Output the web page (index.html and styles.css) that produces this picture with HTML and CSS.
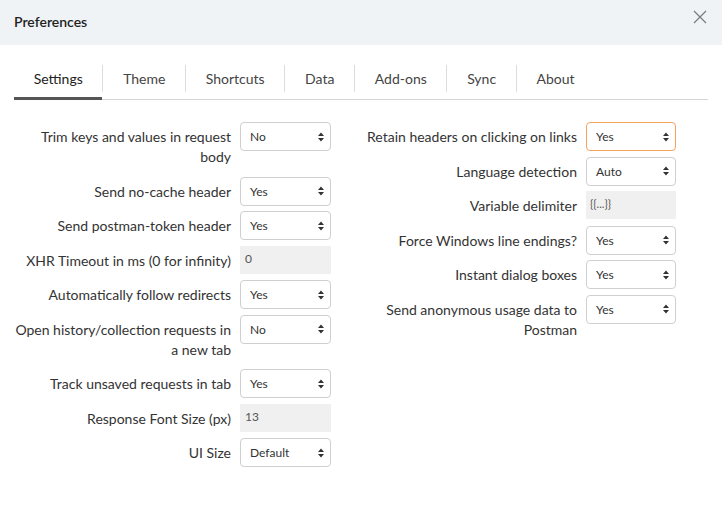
FILE: index.html
```html
<!DOCTYPE html>
<html>
<head>
<meta charset="utf-8">
<title>Preferences</title>
<link rel="stylesheet" href="styles.css">
</head>
<body>
<div class="dialog">
  <div class="header">
    <div class="title">Preferences</div>
    <svg class="close" width="14" height="14" viewBox="0 0 14 14"><path d="M1 1L13 13M13 1L1 13" stroke="#7a7a7a" stroke-width="1.2" fill="none"/></svg>
  </div>
  <div class="tabs">
    <div class="tab active">Settings</div>
    <div class="sep"></div>
    <div class="tab">Theme</div>
    <div class="sep"></div>
    <div class="tab">Shortcuts</div>
    <div class="sep"></div>
    <div class="tab">Data</div>
    <div class="sep"></div>
    <div class="tab">Add-ons</div>
    <div class="sep"></div>
    <div class="tab">Sync</div>
    <div class="sep"></div>
    <div class="tab">About</div>
  </div>
  <div class="form">
    <div class="col">
      <div class="row"><div class="label">Trim keys and values in request body</div><div class="select"><span>No</span><svg width="6" height="10" viewBox="0 0 6 10"><path d="M0 4L3 0.5L6 4ZM0 6L3 9.5L6 6Z" fill="#333"/></svg></div></div>
      <div class="row"><div class="label">Send no-cache header</div><div class="select"><span>Yes</span><svg width="6" height="10" viewBox="0 0 6 10"><path d="M0 4L3 0.5L6 4ZM0 6L3 9.5L6 6Z" fill="#333"/></svg></div></div>
      <div class="row"><div class="label">Send postman-token header</div><div class="select"><span>Yes</span><svg width="6" height="10" viewBox="0 0 6 10"><path d="M0 4L3 0.5L6 4ZM0 6L3 9.5L6 6Z" fill="#333"/></svg></div></div>
      <div class="row"><div class="label">XHR Timeout in ms (0 for infinity)</div><div class="input">0</div></div>
      <div class="row"><div class="label">Automatically follow redirects</div><div class="select"><span>Yes</span><svg width="6" height="10" viewBox="0 0 6 10"><path d="M0 4L3 0.5L6 4ZM0 6L3 9.5L6 6Z" fill="#333"/></svg></div></div>
      <div class="row"><div class="label">Open history/collection requests in a new tab</div><div class="select"><span>No</span><svg width="6" height="10" viewBox="0 0 6 10"><path d="M0 4L3 0.5L6 4ZM0 6L3 9.5L6 6Z" fill="#333"/></svg></div></div>
      <div class="row"><div class="label">Track unsaved requests in tab</div><div class="select"><span>Yes</span><svg width="6" height="10" viewBox="0 0 6 10"><path d="M0 4L3 0.5L6 4ZM0 6L3 9.5L6 6Z" fill="#333"/></svg></div></div>
      <div class="row"><div class="label">Response Font Size (px)</div><div class="input">13</div></div>
      <div class="row"><div class="label">UI Size</div><div class="select"><span>Default</span><svg width="6" height="10" viewBox="0 0 6 10"><path d="M0 4L3 0.5L6 4ZM0 6L3 9.5L6 6Z" fill="#333"/></svg></div></div>
    </div>
    <div class="col">
      <div class="row"><div class="label">Retain headers on clicking on links</div><div class="select focus"><span>Yes</span><svg width="6" height="10" viewBox="0 0 6 10"><path d="M0 4L3 0.5L6 4ZM0 6L3 9.5L6 6Z" fill="#333"/></svg></div></div>
      <div class="row"><div class="label">Language detection</div><div class="select"><span>Auto</span><svg width="6" height="10" viewBox="0 0 6 10"><path d="M0 4L3 0.5L6 4ZM0 6L3 9.5L6 6Z" fill="#333"/></svg></div></div>
      <div class="row"><div class="label">Variable delimiter</div><div class="input small">{{...}}</div></div>
      <div class="row"><div class="label">Force Windows line endings?</div><div class="select"><span>Yes</span><svg width="6" height="10" viewBox="0 0 6 10"><path d="M0 4L3 0.5L6 4ZM0 6L3 9.5L6 6Z" fill="#333"/></svg></div></div>
      <div class="row"><div class="label">Instant dialog boxes</div><div class="select"><span>Yes</span><svg width="6" height="10" viewBox="0 0 6 10"><path d="M0 4L3 0.5L6 4ZM0 6L3 9.5L6 6Z" fill="#333"/></svg></div></div>
      <div class="row"><div class="label">Send anonymous usage data to Postman</div><div class="select"><span>Yes</span><svg width="6" height="10" viewBox="0 0 6 10"><path d="M0 4L3 0.5L6 4ZM0 6L3 9.5L6 6Z" fill="#333"/></svg></div></div>
    </div>
  </div>
</div>
</body>
</html>
```

FILE: styles.css
```css
* { box-sizing: border-box; }
html, body { margin: 0; padding: 0; background: #fff; }
body {
  font-family: Lato, "Open Sans", sans-serif;
  color: #333;
  width: 722px;
  height: 507px;
  overflow: hidden;
}
.header {
  height: 45px;
  background: #eff3f6;
  display: flex;
  align-items: center;
  justify-content: space-between;
  padding: 0 15px 0 14px;
}
.title {
  font-size: 14px;
  font-weight: 600;
  color: #222;
  margin-top: -3px;
}
.close {
  margin-top: -12px;
}
.tabs {
  display: flex;
  align-items: flex-start;
  margin: 16px 14px 0;
  border-bottom: 1px solid #d4d4d4;
}
.tab {
  font-size: 14px;
  line-height: 17px;
  padding: 9px 19.7px 10px;
  color: #444;
  border-bottom: 3px solid transparent;
  margin-bottom: -1px;
}
.tab.active {
  color: #222;
  border-bottom-color: #555;
}
.sep {
  width: 1px;
  height: 27px;
  margin-top: 4px;
  background: #dcdcdc;
}
.form {
  display: grid;
  grid-template-columns: 347px 347px;
  margin: 0 14px;
  padding-top: 22px;
}
.col {
  display: flex;
  flex-direction: column;
  gap: 5.5px;
}
.row {
  display: grid;
  grid-template-columns: 217px 91px;
  column-gap: 9px;
  align-items: start;
}
.col + .col .row {
  grid-template-columns: 216px 90px;
}
.label {
  text-align: right;
  font-size: 14px;
  line-height: 20px;
  padding: 5px 0 4px;
  color: #333;
}
.select {
  height: 29px;
  border: 1px solid #cfcfcf;
  border-radius: 4px;
  background: #fff;
  display: flex;
  align-items: center;
  justify-content: space-between;
  padding: 0 6px 0 9px;
  font-size: 12px;
  color: #333;
}
.select.focus {
  border-color: #f5a25d;
}
.input {
  height: 28px;
  background: #f0f0f0;
  font-size: 12px;
  color: #555;
  padding: 5px 0 0 5px;
  line-height: 16px;
}
.input.small {
  font-size: 11px;
  padding-left: 4px;
}
```
